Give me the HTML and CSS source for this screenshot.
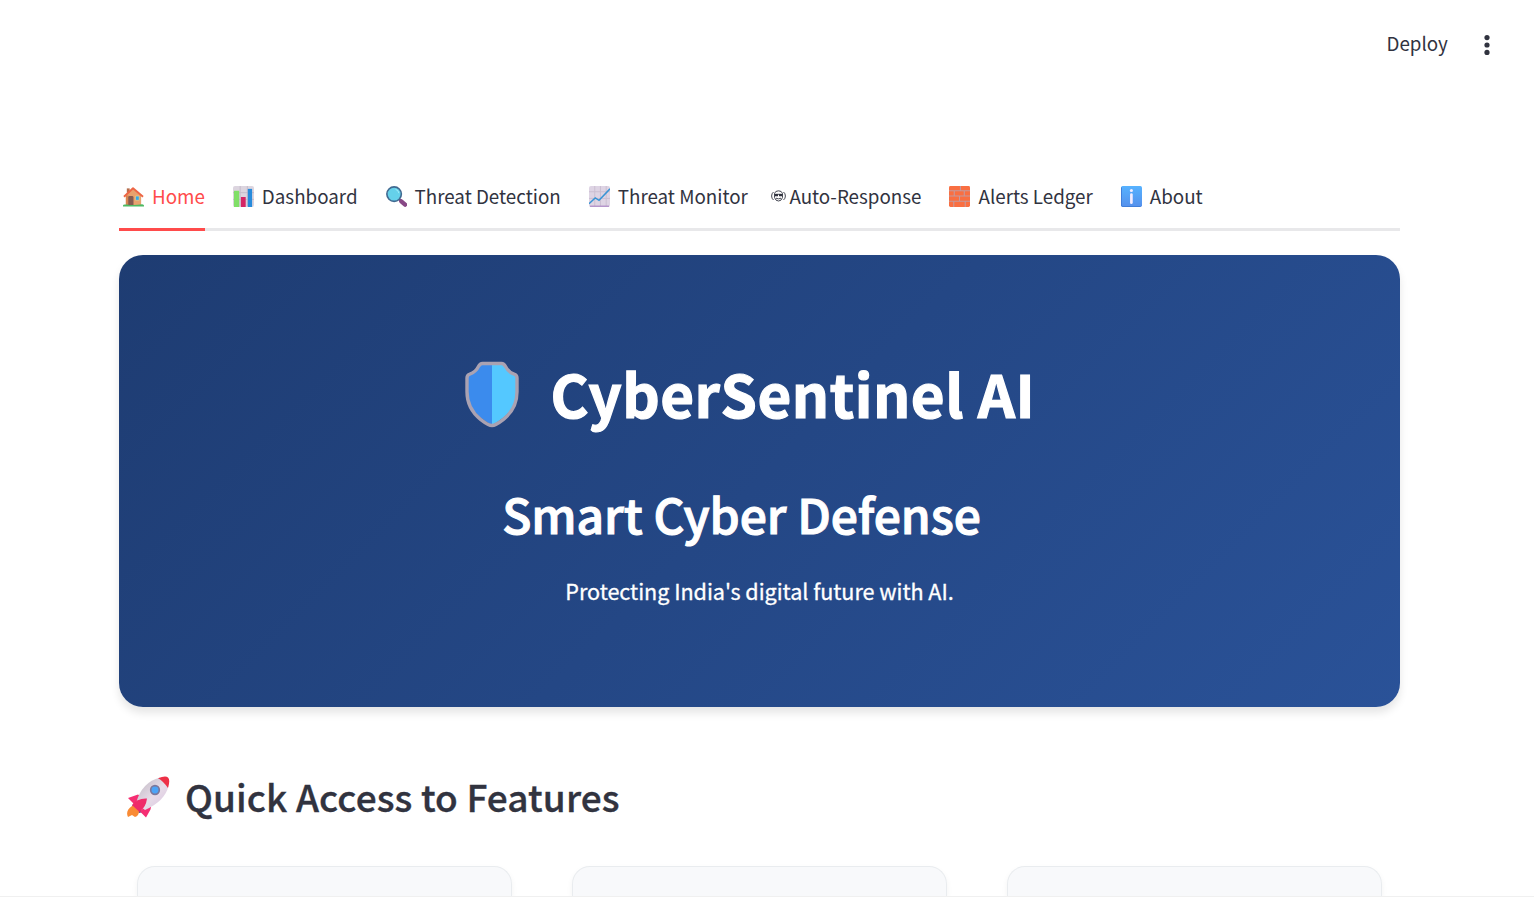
FILE: index.html
```html
<!DOCTYPE html>
<html lang="en">
<head>
<meta charset="utf-8">
<title>CyberSentinel AI</title>
<link rel="stylesheet" href="styles.css">
</head>
<body>
<header class="toolbar">
  <span class="deploy">Deploy</span>
  <svg class="kebab" width="6" height="20" viewBox="0 0 6 20"><circle cx="3" cy="2.6" r="2.6"/><circle cx="3" cy="10" r="2.6"/><circle cx="3" cy="17.4" r="2.6"/></svg>
</header>
<main class="page">
  <nav class="tabs">
    <a class="tab active"><svg class="icon" viewBox="0 0 22 22"><path fill="#e8a26e" d="M3 10 10.500 3 19 10v10H3z"/><path fill="#d98550" d="M3 10h3v10H3z"/><path fill="#855b50" d="M5.500 12q0-1.500 1.500-1.500h2.500q1.500 0 1.500 1.500v8H5.500z"/><path fill="#31a9ec" stroke="#ffcf79" stroke-width=".7" d="M13 10.500h4v4.500h-4z"/><path fill="#b66d4c" d="M4 2.500h3V7H4z"/><path d="m1 11.300 9.500-9 10.500 9" fill="none" stroke="#ed6545" stroke-width="2" stroke-linejoin="round"/><path fill="#4dba63" d="M0 20.500q0-1 2-1h3.500v.5H11q4-.7 9-1 2 .2 2 1.500v1H0z"/></svg><span class="label">Home</span></a>
    <a class="tab"><svg class="icon" viewBox="0 0 22 22"><rect width="22" height="22" rx="2" fill="#dcd5df"/><path d="M0 7h22M0 14h22M7.500 0v21M15 0v21" stroke="#c4bbcb"/><path fill="#80df67" d="M1 5h5.500v17H1z"/><path fill="#d52565" d="M8.300 11.500h5V22h-5z"/><path fill="#278bdc" d="M15.500 3H20v19h-4.500z"/></svg><span class="label">Dashboard</span></a>
    <a class="tab"><svg class="icon" viewBox="0 0 22 22"><path d="m13 13 2.500 2.500" stroke="#62517e" stroke-width="2.500"/><path d="m16 16 4 3.500" stroke="#884886" stroke-width="4.500" stroke-linecap="round"/><circle cx="8.500" cy="8.500" r="7.600" fill="#65d1ea" stroke="#416a91" stroke-width="1.700"/><path d="M10 3.500q3 .8 3.500 4" stroke="#a3edfb" fill="none"/></svg><span class="label">Threat Detection</span></a>
    <a class="tab"><svg class="icon" viewBox="0 0 22 22"><rect width="22" height="22" rx="2" fill="#ded4e4"/><path d="M0 6h22M0 13h22M6 0v21M12 0v21M18 0v21" stroke="#c9bed1"/><path d="M1 21.200h20" stroke="#b18fc8" stroke-width="1.400"/><path d="m0 18.500 6.500-6 4 2.500L22 3" fill="none" stroke="#3894d5" stroke-width="1.500"/></svg><span class="label">Threat Monitor</span></a>
    <a class="tab tab-mono"><svg class="mono-icon" viewBox="0 0 15 14"><g fill="none" stroke="#31333f" stroke-width=".9"><path d="M3.500 4.500Q4.200 1.800 7.500 1.800T11.500 4.500V8.500Q10.500 12 7.500 12T3.500 8.500z"/><path d="M2.500 3Q.6 4.500.6 7t1.900 4M12.500 3q1.900 1.500 1.900 4t-1.900 4M3.500 5.300h8M5 9.200q2.500 1.300 5 0"/></g><path fill="#31333f" d="M4 5h3v2.300H4zM8 5h3v2.300H8z"/></svg><span class="label">Auto-Response</span></a>
    <a class="tab"><svg class="icon" viewBox="0 0 22 22"><rect width="22" height="22" rx="1.500" fill="#f96f42"/><path d="M0 5h22M0 10.500h22M0 16h22M12 0v5M5.500 5v5.500M16 5v5.500M11 10.500V16M5 16v6M17 16v6" stroke="#c49a9d" stroke-width="1.100"/></svg><span class="label">Alerts Ledger</span></a>
    <a class="tab"><svg class="icon" viewBox="0 0 22 22"><defs><linearGradient id="info" x2="0" y2="1"><stop stop-color="#56b2ff"/><stop offset="1" stop-color="#5590ec"/></linearGradient></defs><rect width="22" height="22" rx="1.800" fill="url(#info)"/><path d="M.5 1.500v18.500q0 1.500 1.500 1.500h18.500" fill="none" stroke="#3f7dd8"/><circle cx="10.900" cy="4.700" r="1.600" fill="#f5edff"/><path d="M10.900 9v8.500" stroke="#f5edff" stroke-width="2.800" stroke-linecap="round"/></svg><span class="label">About</span></a>
  </nav>
  <section class="hero">
    <h1 class="hero-title"><svg class="shield" viewBox="0 0 56 68" preserveAspectRatio="none"><path fill="#3b8bed" d="M28 3H15q-3 7-11 10v23q1 16 24 29z"/><path fill="#54c8ff" d="M28 3h13q3 7 11 10v23q-1 16-24 29z"/><path fill="none" stroke="#aaa2b2" stroke-width="3.400" stroke-linejoin="round" d="M18.500 2.500h19q2.500 0 4 3 2.500 5.500 9 8 2.500 1 2.500 3.700v14q0 17-13.500 28Q31.500 65.500 28 65.500T16.500 59.200Q3 48.200 3 31.200v-14q0-2.700 2.500-3.700 6.500-2.500 9-8 1.500-3 4-3z"/></svg><span class="label">CyberSentinel AI</span></h1>
    <h2 class="hero-subtitle"><span class="label">Smart Cyber Defense</span></h2>
    <p class="hero-text"><span class="label">Protecting India's digital future with AI.</span></p>
  </section>
  <h2 class="section-title"><svg class="rocket" viewBox="0 0 44 42"><defs><linearGradient id="body" x2="1" y2="1"><stop stop-color="#bcb5bf"/><stop offset=".55" stop-color="#e7dce8"/><stop offset="1" stop-color="#d8c2df"/></linearGradient></defs><path fill="#62417f" d="m8 27 9 9-4 1-7-7z"/><path fill="#f98b35" d="M6 30q6-1 7 5 0 5-4 6l-3-2-4 2q-3-6 4-11z"/><path fill="#f52e73" d="m2 22 10-3.500 4 2.500-8 7zM25 31l-.5 2.500-4.500 8-6-6 5-5z"/><path fill="url(#body)" d="M10 27Q16 6 34 1.500L42.500 10Q39 25 19 34z"/><path fill="#ed3047" d="M32 2.300q7.500-3 10-.8t0 10.500q-5-7-10-9.700z"/><path fill="#ef2b6a" d="M6 29Q11 22 21 22.500 20 31 13.500 36z"/><circle cx="29" cy="14" r="4.300" fill="#4ca3f6" stroke="#7b789c" stroke-width="1.700"/></svg><span class="label">Quick Access to Features</span></h2>
  <div class="cards"><div class="card"></div><div class="card"></div><div class="card"></div></div>
</main>
</body>
</html>
```
FILE: styles.css
```css
* { box-sizing: border-box; }
body { margin: 0; height: 897px; overflow: hidden; background: #fff; color: #31333f; font-family: "Noto Sans CJK SC", "Noto Sans", sans-serif; border-bottom: 1px solid #f0f0f0; }
svg { display: block; flex: none; }
h1, h2, p { margin: 0; }
.label { white-space: nowrap; }
.toolbar { height: 90px; padding: 0 44px 0 1386.5px; display: flex; align-items: center; justify-content: space-between; }
.deploy { font-size: 18.8px; line-height: 30px; padding-bottom: 5px; }
.kebab { fill: #31333f; }
.page { width: 1281px; margin-left: 119px; }
.tabs { display: flex; gap: 24px; margin-top: 74px; height: 67px; border-bottom: 3px solid #e8e8ea; }
.tab { display: flex; align-items: center; height: 67px; padding: 0 0 1px 4px; font-size: 18.8px; line-height: 30px; border-bottom: 3px solid transparent; }
.tab.active { color: #ff4b4b; border-color: #ff4b4b; }
.icon { width: 21px; height: 21px; margin: 1px 8px 0 0; }
.mono-icon { width: 15px; height: 14px; margin: 1px 3px 0 0; }
.tab-mono { padding-left: 0; margin-left: -.5px; }
.hero { margin-top: 24px; height: 452px; padding-top: 95px; border-radius: 24px; color: #fff; background: linear-gradient(135deg, #1e3c72, #2a5298); box-shadow: 0 6px 9px rgba(0,0,0,.1); display: flex; flex-direction: column; align-items: center; }
.hero-title { display: flex; align-items: center; height: 86px; padding-right: 20px; font-size: 58.3px; line-height: 86px; font-weight: 700; letter-spacing: .5px; -webkit-text-stroke: 1.2px #fff; }
.shield { width: 56px; height: 67px; margin: 2px 31px 0 0; }
.hero-subtitle { margin-top: 41px; padding-right: 36px; font-size: 48px; line-height: 72px; font-weight: 500; letter-spacing: -.05px; -webkit-text-stroke: 1.1px #fff; }
.hero-text { margin-top: 24px; font-size: 21.6px; line-height: 36px; letter-spacing: -.04px; -webkit-text-stroke: .3px #fff; }
.section-title { display: flex; align-items: center; margin-top: 59px; padding-left: 7px; height: 60px; font-size: 37px; line-height: 60px; font-weight: 500; letter-spacing: .12px; -webkit-text-stroke: .35px #31333f; }
.rocket { width: 44px; height: 42px; margin: 2px 15px 0 0; }
.cards { display: flex; gap: 60px; margin: 40px 18px 0; }
.card { flex: 1; height: 30px; border: 1px solid #e9ecef; border-bottom: 0; border-radius: 18px 18px 0 0; background: #f8f9fb; box-shadow: 0 3px 6px rgba(0,0,0,.05); }
```
